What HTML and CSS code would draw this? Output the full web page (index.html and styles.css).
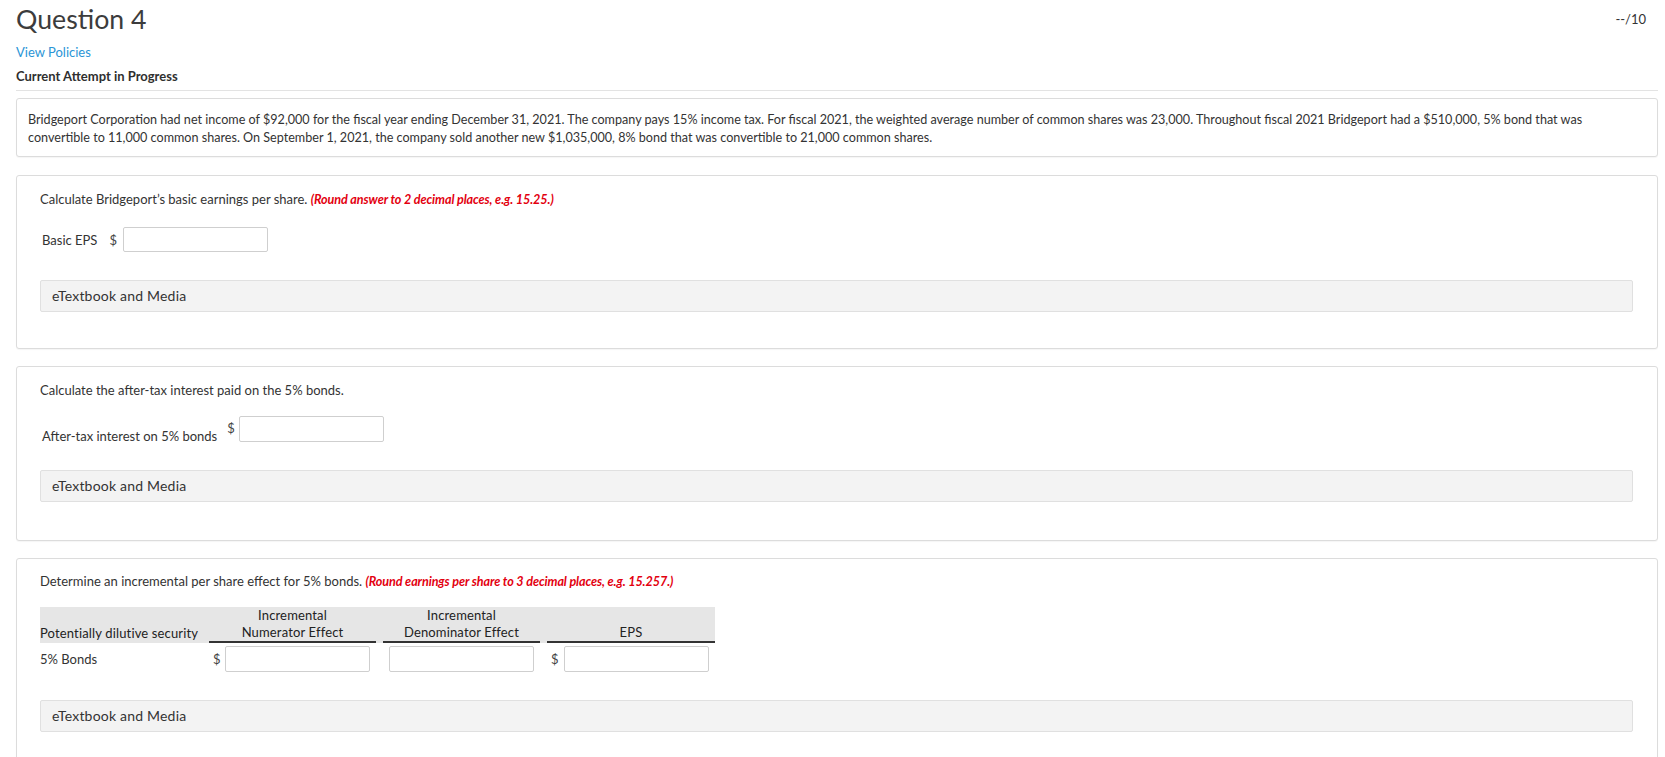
FILE: index.html
```html
<!DOCTYPE html>
<html lang="en">
<head>
<meta charset="utf-8">
<title>Question 4</title>
<link rel="stylesheet" href="styles.css">
</head>
<body>
<div class="page">
  <header class="q-head">
    <h1 class="q-title">Question 4</h1>
    <span class="q-score">--/10</span>
  </header>
  <a class="policies" href="#">View Policies</a>
  <div class="attempt">Current Attempt in Progress</div>
  <hr class="divider">

  <div class="card problem">
    <p>Bridgeport Corporation had net income of $92,000 for the fiscal year ending December 31, 2021. The company pays 15% income tax. For fiscal 2021, the weighted average number of common shares was 23,000. Throughout fiscal 2021 Bridgeport had a $510,000, 5% bond that was convertible to 11,000 common shares. On September 1, 2021, the company sold another new $1,035,000, 8% bond that was convertible to 21,000 common shares.</p>
  </div>

  <section class="card part">
    <p class="prompt">Calculate Bridgeport’s basic earnings per share. <em class="hint">(Round answer to 2 decimal places, e.g. 15.25.)</em></p>
    <div class="answer-row eps-row">
      <span class="label">Basic EPS</span>
      <span class="cur">$</span>
      <input class="field" type="text">
    </div>
    <div class="media">eTextbook and Media</div>
  </section>

  <section class="card part tax-card">
    <p class="prompt">Calculate the after-tax interest paid on the 5% bonds.</p>
    <div class="answer-row tax-row">
      <span class="label">After-tax interest on 5% bonds</span>
      <span class="cur cur-top">$</span>
      <input class="field" type="text">
    </div>
    <div class="media">eTextbook and Media</div>
  </section>

  <section class="card part last">
    <p class="prompt">Determine an incremental per share effect for 5% bonds. <em class="hint">(Round earnings per share to 3 decimal places, e.g. 15.257.)</em></p>
    <div class="dil-table">
      <div class="dil-head">
        <div class="th th-first">Potentially dilutive security</div>
        <div class="th th-ul">Incremental<br>Numerator Effect</div>
        <div class="th th-ul">Incremental<br>Denominator Effect</div>
        <div class="th th-ul">EPS</div>
      </div>
      <div class="dil-row">
        <div class="td td-first">5% Bonds</div>
        <div class="td"><span class="cur">$</span><input class="field" type="text"></div>
        <div class="td"><input class="field" type="text"></div>
        <div class="td"><span class="cur">$</span><input class="field" type="text"></div>
      </div>
    </div>
    <div class="media">eTextbook and Media</div>
  </section>
</div>
</body>
</html>
```

FILE: styles.css
```css
html, body {
  margin: 0;
  padding: 0;
  background: #ffffff;
}

body {
  font-family: Lato, "Open Sans", "Liberation Sans", sans-serif;
  color: #333333;
  font-size: 13px;
  line-height: 18px;
}

.page {
  padding: 0 7px 0 16px;
}

.q-head {
  display: flex;
  justify-content: space-between;
  align-items: flex-start;
}

.q-title {
  margin: 0;
  padding-top: 2px;
  font-size: 26.7px;
  line-height: 34px;
  font-weight: 400;
  color: #3c3c3c;
}

.q-score {
  margin-top: 11px;
  margin-right: 12px;
  font-size: 13px;
  line-height: 16px;
  color: #333333;
}

.policies {
  display: block;
  margin-top: 7px;
  width: max-content;
  color: #2b95d6;
  text-decoration: none;
  font-size: 13px;
  line-height: 18px;
}

.attempt {
  margin-top: 6px;
  font-weight: 700;
  font-size: 13px;
  line-height: 18px;
  color: #2f2f2f;
}

.divider {
  margin: 5px 0 0 0;
  border: 0;
  border-top: 1px solid #e3e3e3;
  height: 0;
}

.card {
  border: 1px solid #dcdcdc;
  border-radius: 3px;
  background: #ffffff;
  box-shadow: 0 1px 1px rgba(0, 0, 0, 0.04);
}

.problem {
  margin-top: 7px;
  padding: 12px 12px 9px 11px;
}

.problem p {
  margin: 0;
  font-size: 12.6px;
  line-height: 18px;
}

.part {
  margin-top: 18px;
  padding: 14px 24px 36px 23px;
}

.tax-card {
  margin-top: 17px;
  padding-bottom: 38px;
}

.part.last {
  margin-top: 17px;
  padding-top: 13px;
}

.prompt {
  margin: 0;
  font-size: 13px;
  line-height: 18px;
}

.hint {
  color: #e3000f;
  font-weight: 700;
  font-style: italic;
  font-size: 12.6px;
  letter-spacing: -0.1px;
}

.answer-row {
  display: flex;
  margin-top: 18px;
  padding-left: 2px;
}

.eps-row {
  align-items: center;
}

.eps-row .label {
  margin-right: 12px;
}

.eps-row .cur {
  margin-right: 6px;
}

.tax-row {
  margin-top: 17px;
  align-items: flex-end;
}

.tax-row .label {
  margin-right: 10px;
  line-height: 18px;
  margin-bottom: -3px;
}

.cur {
  font-size: 13px;
  color: #444444;
}

.cur-top {
  align-self: flex-start;
  margin-top: 3px;
  margin-right: 4px;
}

.field {
  box-sizing: border-box;
  width: 145px;
  height: 25px;
  margin: 0;
  padding: 2px 5px;
  border: 1px solid #cfcfcf;
  border-radius: 2px;
  background: #ffffff;
  font-family: inherit;
  font-size: 13px;
}

.tax-row .field {
  height: 26px;
}

.media {
  margin-top: 28px;
  height: 32px;
  box-sizing: border-box;
  padding: 0 11px;
  border: 1px solid #e0e0e0;
  border-radius: 2px;
  background: #f3f3f3;
  font-size: 14px;
  letter-spacing: 0.2px;
  line-height: 30px;
  color: #333333;
}

/* dilutive table */
.dil-table {
  margin-top: 16px;
  width: 675px;
}

.dil-head,
.dil-row {
  display: grid;
  grid-template-columns: 162px 167px 157px 168px;
  column-gap: 7px;
}

.dil-head {
  background: #e6e6e6;
  align-items: end;
}

.th {
  text-align: center;
  font-size: 13px;
  line-height: 17px;
  color: #222222;
  letter-spacing: 0.15px;
  padding-bottom: 1px;
}

.th-first {
  text-align: left;
  padding-left: 0;
}

.th-ul {
  border-bottom: 2px solid #333333;
  padding-bottom: 0;
}

.dil-row {
  margin-top: 3px;
  align-items: center;
}

.td {
  display: flex;
  align-items: center;
  justify-content: flex-end;
  padding-right: 6px;
}

.td .cur {
  margin-right: auto;
  padding-left: 4px;
}

.td-first {
  justify-content: flex-start;
  padding-right: 0;
  padding-left: 0;
}

.dil-row .field {
  height: 26px;
}
```
